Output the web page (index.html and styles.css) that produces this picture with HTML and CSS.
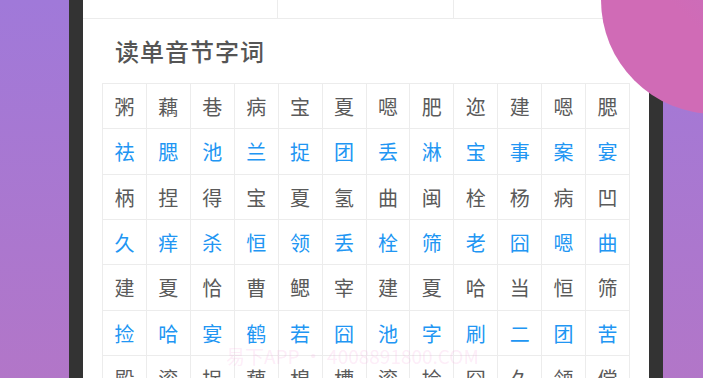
FILE: index.html
```html
<!DOCTYPE html>
<html lang="zh">
<head>
<meta charset="utf-8">
<link rel="stylesheet" href="styles.css">
</head>
<body>
<div class="stage">
  <div class="phone">
    <div class="screen">
      <div class="top-row">
        <div class="top-cell c1"></div>
        <div class="top-cell c2"></div>
        <div class="top-cell c3"></div>
      </div>
      <h2 class="heading">读单音节字词</h2>
      <div class="grid">
        <span>粥</span><span>藕</span><span>巷</span><span>病</span><span>宝</span><span>夏</span><span>嗯</span><span>肥</span><span>迩</span><span>建</span><span>嗯</span><span>腮</span>
        <span class="b">祛</span><span class="b">腮</span><span class="b">池</span><span class="b">兰</span><span class="b">捉</span><span class="b">团</span><span class="b">丢</span><span class="b">淋</span><span class="b">宝</span><span class="b">事</span><span class="b">案</span><span class="b">宴</span>
        <span>柄</span><span>捏</span><span>得</span><span>宝</span><span>夏</span><span>氢</span><span>曲</span><span>闽</span><span>栓</span><span>杨</span><span>病</span><span>凹</span>
        <span class="b">久</span><span class="b">痒</span><span class="b">杀</span><span class="b">恒</span><span class="b">领</span><span class="b">丢</span><span class="b">栓</span><span class="b">筛</span><span class="b">老</span><span class="b">囧</span><span class="b">嗯</span><span class="b">曲</span>
        <span>建</span><span>夏</span><span>恰</span><span>曹</span><span>鳃</span><span>宰</span><span>建</span><span>夏</span><span>哈</span><span>当</span><span>恒</span><span>筛</span>
        <span class="b">捡</span><span class="b">哈</span><span class="b">宴</span><span class="b">鹤</span><span class="b">若</span><span class="b">囧</span><span class="b">池</span><span class="b">字</span><span class="b">刷</span><span class="b">二</span><span class="b">团</span><span class="b">苦</span>
        <span>殿</span><span>滚</span><span>捉</span><span>藕</span><span>棉</span><span>槽</span><span>滚</span><span>捡</span><span>囧</span><span>久</span><span>领</span><span>偿</span>
      </div>
    </div>
  </div>
  <div class="blob"></div>
  <div class="watermark">易下APP • 4008891800.COM</div>
</div>
</body>
</html>
```

FILE: styles.css
```css
html, body {
  margin: 0;
  padding: 0;
  width: 703px;
  height: 378px;
  overflow: hidden;
}
body {
  background: linear-gradient(180deg, #a079d9 0%, #b276c8 100%);
  font-family: "Noto Sans CJK SC", "Noto Sans", sans-serif;
}
.stage {
  position: relative;
  width: 703px;
  height: 378px;
  overflow: hidden;
}
.phone {
  margin-left: 69px;
  width: 594px;
  height: 378px;
  background: #333333;
  padding: 0 14px;
  box-sizing: border-box;
}
.screen {
  background: #ffffff;
  height: 100%;
  overflow: hidden;
}
.top-row {
  display: flex;
  height: 18px;
  border-bottom: 1px solid #ececec;
}
.top-cell {
  border-right: 1px solid #ececec;
}
.c1 { width: 194px; }
.c2 { width: 175px; }
.c3 { flex: 1; border-right: none; }
.heading {
  margin: 0;
  height: 64px;
  padding-left: 32px;
  padding-bottom: 2px;
  box-sizing: border-box;
  display: flex;
  align-items: center;
  font-size: 24px;
  font-weight: 500;
  color: #555555;
  letter-spacing: 1px;
}
.grid {
  margin-left: 19px;
  width: 528px;
  display: grid;
  grid-template-columns: repeat(12, 1fr);
  grid-auto-rows: 45.33px;
  border-left: 1px solid #ececec;
  border-top: 1px solid #ececec;
  box-sizing: border-box;
}
.grid span {
  border-right: 1px solid #ececec;
  border-bottom: 1px solid #ececec;
  display: flex;
  align-items: center;
  justify-content: center;
  font-size: 20px;
  color: #5a5a5a;
  padding-top: 1px;
}
.grid span.b {
  color: #2196f3;
}
.blob {
  position: absolute;
  left: 601px;
  top: -114px;
  width: 228px;
  height: 228px;
  border-radius: 50%;
  background: linear-gradient(225deg, #a87fd0 0%, #c56fbe 35%, #d06bb6 60%);
}
.watermark {
  position: absolute;
  left: 226px;
  top: 344px;
  font-family: "Noto Sans CJK SC", "Liberation Sans", sans-serif;
  font-size: 19px;
  line-height: 24px;
  color: rgba(246, 150, 215, 0.18);
  white-space: nowrap;
}
```
